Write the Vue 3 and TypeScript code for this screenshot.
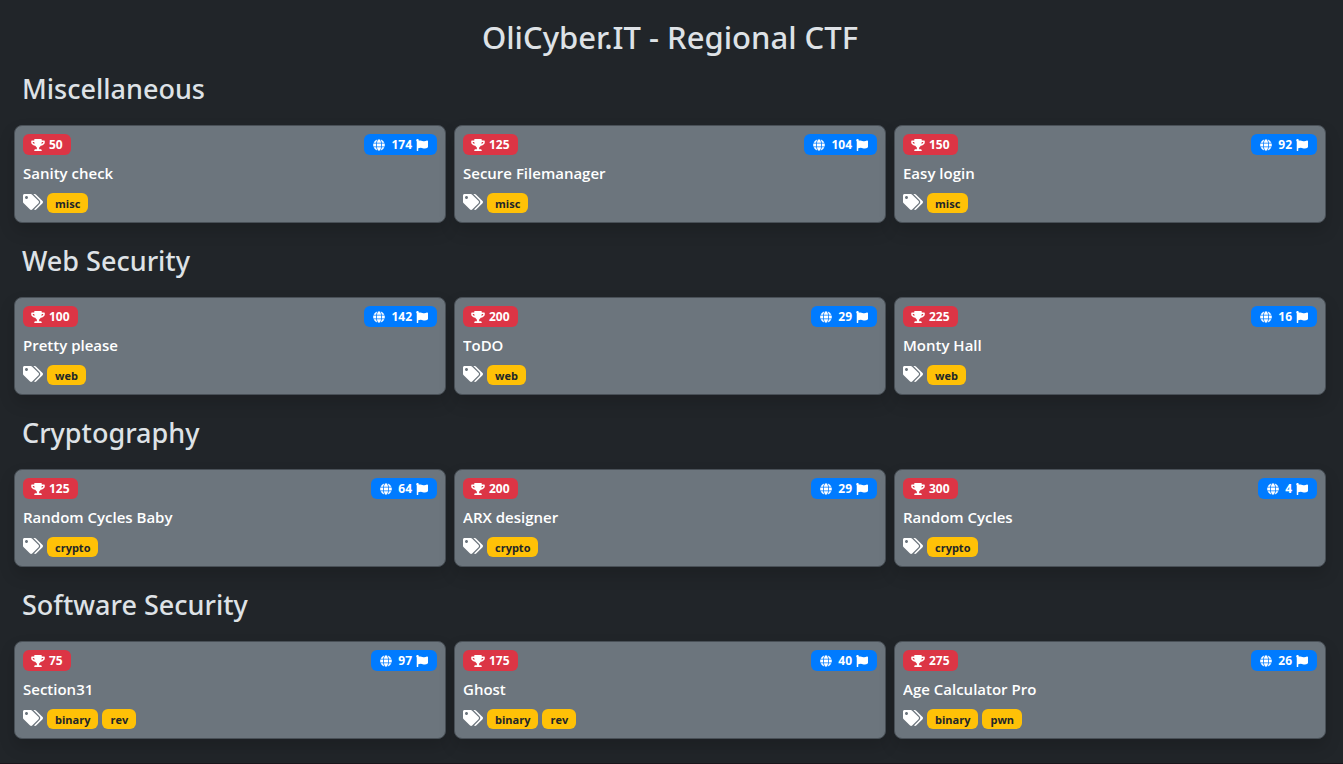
<script setup lang="ts">
interface Challenge {
  title: string
  points: number
  solves: number
  tags: string[]
}

interface Category {
  name: string
  challenges: Challenge[]
}

const categories: Category[] = [
  {
    name: 'Miscellaneous',
    challenges: [
      { title: 'Sanity check', points: 50, solves: 174, tags: ['misc'] },
      { title: 'Secure Filemanager', points: 125, solves: 104, tags: ['misc'] },
      { title: 'Easy login', points: 150, solves: 92, tags: ['misc'] },
    ],
  },
  {
    name: 'Web Security',
    challenges: [
      { title: 'Pretty please', points: 100, solves: 142, tags: ['web'] },
      { title: 'ToDO', points: 200, solves: 29, tags: ['web'] },
      { title: 'Monty Hall', points: 225, solves: 16, tags: ['web'] },
    ],
  },
  {
    name: 'Cryptography',
    challenges: [
      { title: 'Random Cycles Baby', points: 125, solves: 64, tags: ['crypto'] },
      { title: 'ARX designer', points: 200, solves: 29, tags: ['crypto'] },
      { title: 'Random Cycles', points: 300, solves: 4, tags: ['crypto'] },
    ],
  },
  {
    name: 'Software Security',
    challenges: [
      { title: 'Section31', points: 75, solves: 97, tags: ['binary', 'rev'] },
      { title: 'Ghost', points: 175, solves: 40, tags: ['binary', 'rev'] },
      { title: 'Age Calculator Pro', points: 275, solves: 26, tags: ['binary', 'pwn'] },
    ],
  },
]
</script>

<template>
  <main class="page">
    <h1 class="page-title">OliCyber.IT - Regional CTF</h1>
    <section v-for="category in categories" :key="category.name" class="category">
      <h2 class="category-title">{{ category.name }}</h2>
      <div class="cards">
        <article v-for="challenge in category.challenges" :key="challenge.title" class="card">
          <div class="card-top">
            <span class="badge points">
              <svg class="icon trophy" viewBox="0 0 576 512" aria-hidden="true"><path d="M552 64H448V24c0-13.3-10.7-24-24-24H152c-13.3 0-24 10.7-24 24v40H24C10.7 64 0 74.7 0 88v56c0 35.7 22.5 72.4 61.9 100.7 31.5 22.7 69.8 37.1 110 41.7C203.3 338.5 240 360 240 360v72h-48c-35.3 0-64 20.7-64 56v12c0 6.6 5.4 12 12 12h296c6.6 0 12-5.4 12-12v-12c0-35.3-28.7-56-64-56h-48v-72s36.7-21.5 68.1-73.6c40.3-4.6 78.6-19 110-41.7 39.3-28.3 61.9-65 61.9-100.7V88c0-13.3-10.7-24-24-24zM99.3 192.8C74.9 175.2 64 155.6 64 144v-16h64.2c1 32.6 5.8 61.2 12.8 86.2-15.1-5.2-29.2-12.4-41.7-21.4zM512 144c0 16.1-17.7 36.1-35.3 48.8-12.5 9-26.7 16.2-41.8 21.4 7-25 11.8-53.6 12.8-86.2H512v16z" /></svg>
              <span>{{ challenge.points }}</span>
            </span>
            <span class="badge solves">
              <svg class="icon globe" viewBox="0 0 496 512" aria-hidden="true"><path d="M336.5 160C322 70.7 287.8 8 248 8s-74 62.7-88.5 152h177zM152 256c0 22.2 1.2 43.5 3.3 64h185.3c2.1-20.5 3.3-41.8 3.3-64s-1.2-43.5-3.3-64H155.3c-2.1 20.5-3.3 41.8-3.3 64zm324.7-96c-28.6-67.9-86.5-120.4-158-141.6 24.4 33.8 41.2 84.7 50 141.6h108zM177.2 18.4C105.8 39.6 47.8 92.1 19.3 160h108c8.7-56.9 25.5-107.8 49.9-141.6zM487.4 192H372.7c2.1 21 3.3 42.5 3.3 64s-1.2 43-3.3 64h114.6c5.5-20.5 8.6-41.8 8.6-64s-3.1-43.5-8.5-64zM120 256c0-21.5 1.2-43 3.3-64H8.6C3.2 212.5 0 233.8 0 256s3.2 43.5 8.6 64h114.6c-2-21-3.2-42.5-3.2-64zm39.5 96c14.5 89.3 48.7 152 88.5 152s74-62.7 88.5-152h-177zm159.3 141.6c71.4-21.2 129.4-73.7 158-141.6h-108c-8.8 56.9-25.6 107.8-50 141.6zM19.3 352c28.6 67.9 86.5 120.4 158 141.6-24.4-33.8-41.2-84.7-50-141.6h-108z" /></svg>
              <span class="count">{{ challenge.solves }}</span>
              <svg class="icon flag" viewBox="0 0 512 512" aria-hidden="true"><path d="M349.565 98.783C295.978 98.783 251.721 64 184.348 64c-24.955 0-47.309 4.384-68.045 12.013a55.947 55.947 0 0 0 3.586-23.562C118.117 24.015 94.806 1.206 66.338.048 34.345-1.254 8 24.296 8 56c0 19.026 9.497 35.825 24 45.945V488c0 13.255 10.745 24 24 24h16c13.255 0 24-10.745 24-24v-94.4c28.311-12.064 63.582-22.122 114.435-22.122 53.588 0 97.844 34.783 165.217 34.783 48.169 0 86.667-16.294 122.505-40.858C506.84 359.452 512 349.571 512 339.045v-243.1c0-23.393-24.269-38.87-45.485-29.016-34.338 15.948-76.454 31.854-116.95 31.854z" /></svg>
            </span>
          </div>
          <h3 class="card-title">{{ challenge.title }}</h3>
          <div class="tags">
            <svg class="icon tags-icon" viewBox="0 0 640 512" aria-hidden="true"><path d="M497.941 225.941L286.059 14.059A48 48 0 0 0 252.118 0H48C21.49 0 0 21.49 0 48v204.118a48 48 0 0 0 14.059 33.941l211.882 211.882c18.744 18.745 49.136 18.746 67.882 0l204.118-204.118c18.745-18.745 18.745-49.137 0-67.882zM112 160c-26.51 0-48-21.49-48-48s21.49-48 48-48 48 21.49 48 48-21.49 48-48 48zm513.941 133.823L421.823 497.941c-18.745 18.745-49.137 18.745-67.882 0l-.36-.36L527.64 323.522c16.999-16.999 26.36-39.6 26.36-63.64s-9.362-46.641-26.36-63.64L331.397 0h48.721a48 48 0 0 1 33.941 14.059l211.882 211.882c18.745 18.745 18.745 49.137 0 67.882z" /></svg>
            <span v-for="tag in challenge.tags" :key="tag" class="tag">{{ tag }}</span>
          </div>
        </article>
      </div>
    </section>
  </main>
</template>

<style>
body {
  margin: 0;
  background: #212529;
}
</style>

<style scoped>
.page {
  box-sizing: border-box;
  min-height: 100vh;
  padding: 17px 17px 4px 14px;
  border-bottom: 1px solid #1a151b;
  background: #212529;
  color: #dee2e6;
  font-family: "Segoe UI", "Open Sans", "Noto Sans", sans-serif;
}

.page-title {
  margin: 0 0 14px;
  font-family: "Segoe UI", "Noto Sans", "Open Sans", sans-serif;
  font-size: 31px;
  font-weight: 500;
  line-height: 40px;
  text-align: center;
}

.category {
  margin-bottom: 20px;
}

.category-title {
  margin: 0 0 18px;
  padding-left: 8px;
  font-family: "Segoe UI", "Noto Sans", "Open Sans", sans-serif;
  font-size: 27px;
  font-weight: 500;
  line-height: 36px;
}

.cards {
  display: grid;
  grid-template-columns: repeat(3, minmax(0, 1fr));
  gap: 8px;
}

.card {
  padding: 8px 8px 9px;
  border: 1px solid #495057;
  border-radius: 8px;
  background: #6c757d;
  color: #fff;
  box-shadow: 0 8px 16px rgba(0, 0, 0, 0.15);
}

.card-top {
  display: flex;
  justify-content: space-between;
}

.badge {
  display: inline-flex;
  align-items: center;
  gap: 4px;
  padding: 0 8px;
  border-radius: 6px;
  font-size: 12px;
  font-weight: 700;
  line-height: 21px;
}

.points {
  background: #dc3545;
}

.solves {
  padding: 0 9px;
  background: #007bff;
}

.count {
  margin-left: 2px;
}

.icon {
  display: block;
  flex: none;
  fill: currentColor;
}

.trophy {
  width: 14px;
  height: 12px;
}

.globe,
.flag {
  width: 12px;
  height: 12px;
}

.card-title {
  margin: 9px 0 11px;
  overflow: hidden;
  font-size: 15px;
  font-weight: 600;
  line-height: 18px;
  white-space: nowrap;
}

.tags {
  display: flex;
  gap: 4px;
}

.tags-icon {
  width: 20px;
  height: 16px;
  margin-top: 1px;
}

.tag {
  padding: 1px 8px 0;
  border-radius: 6px;
  background: #ffc107;
  color: #212529;
  font-size: 11px;
  font-weight: 700;
  line-height: 19px;
}
</style>
